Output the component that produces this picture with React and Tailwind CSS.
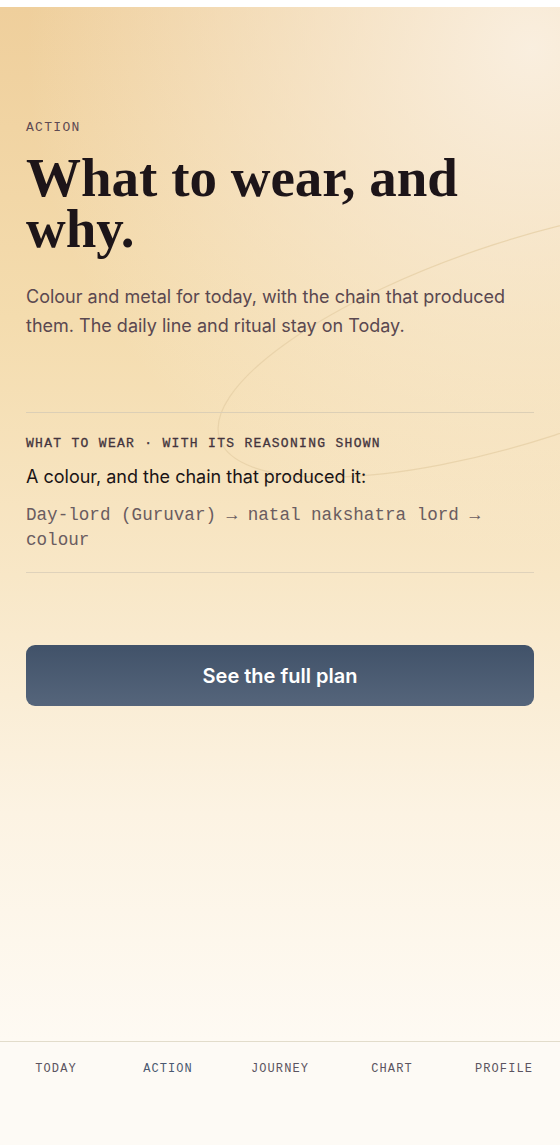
const mono = "font-['Liberation_Mono','DejaVu_Sans_Mono',monospace]";
const sans = "font-['Inter','Noto_Sans',sans-serif]";

const tabs = [
  { label: "TODAY", active: false },
  { label: "ACTION", active: true },
  { label: "JOURNEY", active: false },
  { label: "CHART", active: false },
  { label: "PROFILE", active: false },
];

const Ring = () => (
  <svg
    className="pointer-events-none absolute left-0 top-0"
    width="560"
    height="600"
    viewBox="0 0 560 600"
    fill="none"
  >
    <ellipse
      cx="524"
      cy="333"
      rx="320"
      ry="100"
      transform="rotate(-18 524 333)"
      stroke="#e6cfa6"
      strokeOpacity="0.8"
      strokeWidth="1.2"
    />
  </svg>
);

const App = () => {
  return (
    <div className={`flex min-h-[1145px] flex-col bg-white ${sans}`}>
      <div className="h-[7px] bg-white" />

      <main className="relative flex-1 overflow-hidden bg-[radial-gradient(circle_at_95%_4%,rgba(250,240,226,0.95),rgba(250,240,226,0)_45%),linear-gradient(180deg,#efcf9c_0%,#f4dcae_30%,#f8e7c7_55%,#fcf3e3_78%,#fefaf3_100%)] px-[26px] pt-[111px]">
        <Ring />

        <div className="relative">
          <p className={`${mono} text-[13px] leading-5 tracking-[0.1em] text-[#5e4a52]`}>
            ACTION
          </p>

          <h1 className="mt-[14px] font-['Liberation_Serif','DejaVu_Serif',serif] text-[55px] font-bold leading-[51px] text-[#1d1519]">
            What to wear, and why.
          </h1>

          <p className="mt-[28px] text-[18px] leading-[29px] text-[#5a4850]">
            Colour and metal for today, with the chain that produced them. The
            daily line and ritual stay on Today.
          </p>

          <div className="mt-[72px] border-t border-[#dccfb6]" />

          <section className="pt-[21px] pb-[19px]">
            <p className={`${mono} text-[13px] leading-5 tracking-[0.1em] text-[#43343d] [-webkit-text-stroke:0.3px_#43343d]`}>
              WHAT TO WEAR · WITH ITS REASONING SHOWN
            </p>
            <p className="mt-[11px] text-[18px] leading-6 text-[#1a1416]">
              A colour, and the chain that produced it:
            </p>
            <p className={`${mono} mt-[14px] text-[17.6px] leading-[25px] text-[#6a5c60]`}>
              Day-lord (Guruvar) → natal nakshatra lord → colour
            </p>
          </section>

          <div className="border-t border-[#dfd2bb]" />

          <button className="mt-[72px] h-[61px] w-full rounded-[9px] bg-[linear-gradient(180deg,#415269,#55657b)] text-[20px] font-semibold text-white">
            See the full plan
          </button>
        </div>
      </main>

      <nav className="grid h-[104px] grid-cols-5 border-t border-[#e2dccb] bg-[#fdfaf5] pt-[19px]">
        {tabs.map((t) => (
          <div
            key={t.label}
            className={`${mono} text-center text-[12px] leading-4 tracking-[0.09em] ${
              t.active ? "text-[#4a5870]" : "text-[#5b5460]"
            }`}
          >
            {t.label}
          </div>
        ))}
      </nav>
    </div>
  );
};

export default App;
